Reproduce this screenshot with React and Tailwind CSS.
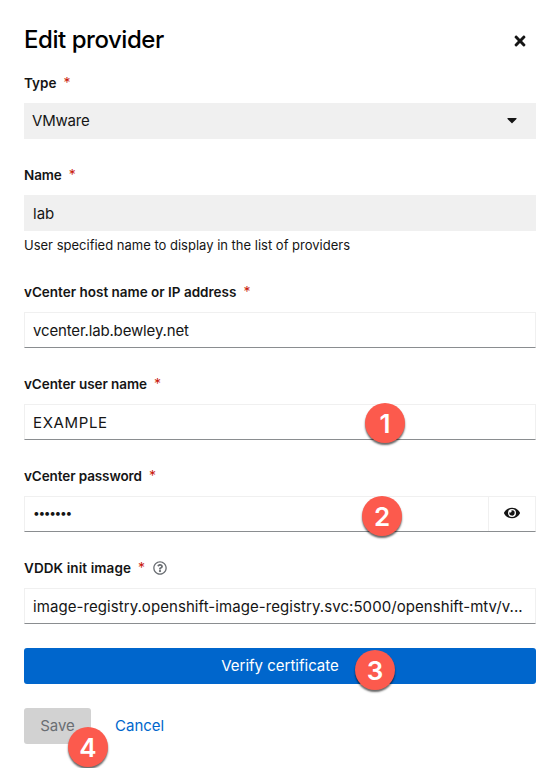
import { FaTimes, FaCaretDown, FaEye, FaRegQuestionCircle } from "react-icons/fa";

function Label({ children, tracking = "tracking-normal", help }) {
  return (
    <div className="flex h-8 items-start text-[13.5px] leading-6 font-semibold text-[#151515]">
      <span className={`whitespace-nowrap ${tracking}`}>{children}</span>
      <span className="ml-[7px] text-[14px] leading-6 font-normal text-[#c9190b]">*</span>
      {help && <FaRegQuestionCircle className="mt-[5px] ml-2 size-[14px] text-[#6a6e73]" />}
    </div>
  );
}

function Marker({ n, place }) {
  return (
    <div
      className={`absolute flex size-10 items-center justify-center rounded-full bg-[#fc5a4d] pt-px text-[26px] leading-none font-semibold text-white shadow-[0_2px_2px_rgba(0,0,0,0.6)] ${place}`}
    >
      {n}
    </div>
  );
}

const box =
  "relative flex h-9 items-center border border-[#f0f0f0] border-b-[#8a8d90] pl-2 whitespace-nowrap";

export default function App() {
  return (
    <div className="h-[768px] w-[559px] overflow-hidden bg-white pr-[23px] pl-6 font-['Inter',sans-serif] text-[15px] text-[#151515]">
      <header className="flex h-[71px] items-start justify-between pt-[25px]">
        <h1 className="text-[24px] leading-[30px] font-medium tracking-[-0.45px] text-black">Edit provider</h1>
        <FaTimes className="mt-2 mr-2 size-4" />
      </header>

      <div className="flex flex-col gap-6">
        <div>
          <Label>Type</Label>
          <div className="flex h-9 items-center justify-between bg-[#f0f0f0] px-2">
            <span className="tracking-[-0.2px]">VMware</span>
            <FaCaretDown className="mr-2 mb-[2px] size-4" />
          </div>
        </div>

        <div>
          <Label tracking="tracking-[-0.1px]">Name</Label>
          <div className="flex h-9 items-center bg-[#f0f0f0] px-[9px]">
            <span className="pt-[2px]">lab</span>
          </div>
          <p className="h-[25px] pt-1 text-[13px] leading-[21px]">
            User specified name to display in the list of providers
          </p>
        </div>

        <div>
          <Label>vCenter host name or IP address</Label>
          <div className={box}>
            <span className="pt-[2px] tracking-[-0.15px]">vcenter.lab.bewley.net</span>
          </div>
        </div>

        <div>
          <Label tracking="tracking-[-0.07px]">vCenter user name</Label>
          <div className={box}>
            <span className="pt-[2px] tracking-[0.65px]">EXAMPLE</span>
            <Marker n={1} place="top-[-2px] left-[340px]" />
          </div>
        </div>

        <div>
          <Label tracking="tracking-[-0.1px]">vCenter password</Label>
          <div className={box}>
            <span className="flex-1 pb-[2px] text-[12px] tracking-[-1.35px]">•••••••</span>
            <span className="flex h-[34px] w-[47px] items-center justify-center border-l border-[#f0f0f0]">
              <FaEye className="mb-[2px] size-4" />
            </span>
            <Marker n={2} place="top-[-1px] left-[337px]" />
          </div>
        </div>

        <div>
          <Label tracking="tracking-[0.1px]" help>VDDK init image</Label>
          <div className={box}>
            <span className="pt-[2px] tracking-[0.07px]">image-registry.openshift-image-registry.svc:5000/openshift-mtv/v...</span>
          </div>
        </div>

        <button className="relative flex h-9 items-center justify-center rounded-[3px] bg-[#0066cc] text-white">
          <span>Verify certificate</span>
          <Marker n={3} place="top-[2px] left-[331px]" />
        </button>

        <div className="flex">
          <button className="relative flex h-9 w-[67px] items-center justify-center rounded-[3px] bg-[#d2d2d2] text-[#6a6e73]">
            <span>Save</span>
            <Marker n={4} place="top-[19px] left-[44px]" />
          </button>
          <button className="ml-6 flex h-9 items-center text-[#0066cc]">
            <span>Cancel</span>
          </button>
        </div>
      </div>
    </div>
  );
}
